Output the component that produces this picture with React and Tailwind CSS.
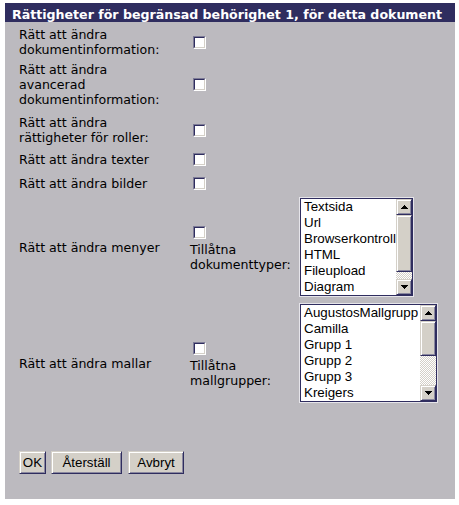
import React from 'react';

const label = "font-['DejaVu_Sans',sans-serif] text-[12.6px] leading-[15px] text-black";
const sysFont = "font-['Liberation_Sans',Arial,sans-serif] text-[13.33px]";

function Check({ className = '' }) {
  return (
    <span className={`block w-[13px] h-[13px] border border-t-[#7d7b96] border-l-[#7d7b96] border-r-white border-b-white ${className}`}>
      <span className="block w-full h-full bg-white border border-t-[#2f2d5f] border-l-[#2f2d5f] border-r-[#d4d0c8] border-b-[#d4d0c8]" />
    </span>
  );
}

function Arrow({ up }) {
  // little pixel triangle, 7x4
  return (
    <svg width="7" height="4" viewBox="0 0 7 4" shapeRendering="crispEdges">
      {up ? (
        <g fill="#000">
          <rect x="3" y="0" width="1" height="1" />
          <rect x="2" y="1" width="3" height="1" />
          <rect x="1" y="2" width="5" height="1" />
          <rect x="0" y="3" width="7" height="1" />
        </g>
      ) : (
        <g fill="#000">
          <rect x="0" y="0" width="7" height="1" />
          <rect x="1" y="1" width="5" height="1" />
          <rect x="2" y="2" width="3" height="1" />
          <rect x="3" y="3" width="1" height="1" />
        </g>
      )}
    </svg>
  );
}

const raised =
  "bg-[#d4d0c8] border border-t-[#d4d0c8] border-l-[#d4d0c8] border-r-[#2f2d5f] border-b-[#2f2d5f] shadow-[inset_1px_1px_0_#ffffff,inset_-1px_-1px_0_#8a889f]";

function ListBox({ items, className, thumb }) {
  return (
    <div className={`border border-[#e6e5ea] ${className}`}>
      <div className="flex h-full border border-[#2f2d5f] bg-white">
        <div className={`flex-1 overflow-hidden pl-[3px] ${sysFont} leading-[16px] text-black whitespace-nowrap`}>
          {items.map((it) => (
            <div key={it}>{it}</div>
          ))}
        </div>
        <div className="w-[16px] flex flex-col">
          <div className={`h-[16px] flex items-center justify-center ${raised}`}>
            <Arrow up />
          </div>
          <div className={`${thumb} ${raised}`} />
          <div className="flex-1 bg-[repeating-conic-gradient(#d4d0c8_0%_25%,#ffffff_0%_50%)] bg-[length:2px_2px]" />
          <div className={`h-[16px] flex items-center justify-center ${raised}`}>
            <Arrow />
          </div>
        </div>
      </div>
    </div>
  );
}

function Row({ text, className = '' }) {
  return (
    <div className={`flex items-center ${className}`}>
      <div className={`w-[171px] ${label}`}>{text}</div>
      <Check className="ml-[3px] my-[3px]" />
    </div>
  );
}

function Btn({ children, className = '' }) {
  return (
    <button className={`h-[23px] ${raised} ${sysFont} text-black leading-none ${className}`}>
      {children}
    </button>
  );
}

export default function App() {
  return (
    <div className="w-[459px] h-[505px] bg-white pt-[3px] pl-[5px]">
      <div className="w-[450px] bg-[#bcbabf]">
        <div className="h-[19px] bg-[#2f2d5f] pl-[7px] pt-[4px] font-['DejaVu_Sans',sans-serif] text-[12.6px] leading-[15px] font-bold text-white whitespace-nowrap">
          Rättigheter för begränsad behörighet 1, för detta dokument
        </div>

        <div className="flex flex-col pl-[14px] pb-[25px]">
          <Row className="mt-[5px]" text={<>Rätt att ändra<br />dokumentinformation:</>} />
          <Row className="mt-[5px]" text={<>Rätt att ändra<br />avancerad<br />dokumentinformation:</>} />
          <Row className="mt-[8px]" text={<>Rätt att ändra<br />rättigheter för roller:</>} />
          <Row className="mt-[5px]" text="Rätt att ändra texter" />
          <Row className="mt-[5px]" text="Rätt att ändra bilder" />

          <div className="mt-[4px] flex items-center h-[100px]">
            <div className={`w-[171px] ${label}`}>Rätt att ändra menyer</div>
            <div className="w-[109px]">
              <Check className="ml-[3px] my-[3px]" />
              <div className={label}>Tillåtna<br />dokumenttyper:</div>
            </div>
            <ListBox
              className="w-[115px] h-[100px]"
              thumb="h-[57px]"
              items={['Textsida', 'Url', 'Browserkontroll', 'HTML', 'Fileupload', 'Diagram']}
            />
          </div>

          <div className="mt-[6px] flex items-center h-[121px]">
            <div className={`w-[171px] ${label}`}>Rätt att ändra mallar</div>
            <div className="w-[109px]">
              <Check className="ml-[3px] my-[3px]" />
              <div className={label}>Tillåtna<br />mallgrupper:</div>
            </div>
            <ListBox
              className="w-[139px] h-[100px] self-start"
              thumb="h-[35px]"
              items={['AugustosMallgrupp', 'Camilla', 'Grupp 1', 'Grupp 2', 'Grupp 3', 'Kreigers']}
            />
          </div>

          <div className="mt-[27px] flex gap-[5px]">
            <Btn className="w-[27px]">OK</Btn>
            <Btn className="w-[71px] mr-[1px]">Återställ</Btn>
            <Btn className="w-[56px]">Avbryt</Btn>
          </div>
        </div>
      </div>
    </div>
  );
}
